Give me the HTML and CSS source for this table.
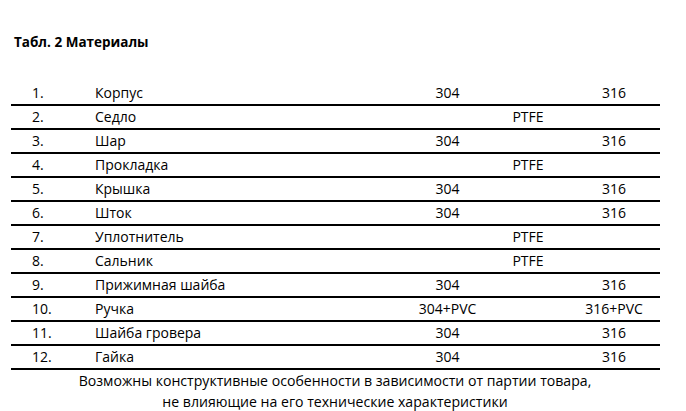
FILE: index.html
```html
<!DOCTYPE html>
<html lang="ru">
<head>
<meta charset="utf-8">
<link rel="stylesheet" href="styles.css">
</head>
<body>
<div class="page">
  <h1 class="title">Табл. 2 Материалы</h1>
  <div class="table">
    <div class="row"><span class="num">1.</span><span class="name">Корпус</span><span class="c3">304</span><span class="c4">316</span></div>
    <div class="row"><span class="num">2.</span><span class="name">Седло</span><span class="both">PTFE</span></div>
    <div class="row"><span class="num">3.</span><span class="name">Шар</span><span class="c3">304</span><span class="c4">316</span></div>
    <div class="row"><span class="num">4.</span><span class="name">Прокладка</span><span class="both">PTFE</span></div>
    <div class="row"><span class="num">5.</span><span class="name">Крышка</span><span class="c3">304</span><span class="c4">316</span></div>
    <div class="row"><span class="num">6.</span><span class="name">Шток</span><span class="c3">304</span><span class="c4">316</span></div>
    <div class="row"><span class="num">7.</span><span class="name">Уплотнитель</span><span class="both">PTFE</span></div>
    <div class="row"><span class="num">8.</span><span class="name">Сальник</span><span class="both">PTFE</span></div>
    <div class="row"><span class="num">9.</span><span class="name">Прижимная шайба</span><span class="c3">304</span><span class="c4">316</span></div>
    <div class="row"><span class="num">10.</span><span class="name">Ручка</span><span class="c3">304+PVC</span><span class="c4">316+PVC</span></div>
    <div class="row"><span class="num">11.</span><span class="name">Шайба гровера</span><span class="c3">304</span><span class="c4">316</span></div>
    <div class="row"><span class="num">12.</span><span class="name">Гайка</span><span class="c3">304</span><span class="c4">316</span></div>
  </div>
  <p class="note">Возможны конструктивные особенности в зависимости от партии товара,<br>не влияющие на его технические характеристики</p>
</div>
</body>
</html>
```
FILE: styles.css
```css
html, body {
  margin: 0;
  padding: 0;
  background: #fff;
}
.page {
  width: 686px;
  height: 411px;
  overflow: hidden;
  font-family: "Open Sans", "Liberation Sans", sans-serif;
  color: #000;
}
.title {
  margin: 0;
  padding: 31px 0 0 14px;
  height: 82px;
  box-sizing: border-box;
  font-size: 13.5px;
  font-weight: 700;
  line-height: 22px;
}
.table {
  margin: 0 0 0 11px;
  width: 649px;
}
.row {
  display: grid;
  grid-template-columns: 84px 301px 103px 69px 92px;
  height: 24px;
  box-sizing: border-box;
  border-bottom: 2px solid #000;
  font-size: 14px;
  line-height: 22px;
}
.num {
  padding-left: 21px;
}
.c3 {
  grid-column: 3;
  text-align: center;
}
.c4 {
  grid-column: 5;
  text-align: center;
}
.both {
  grid-column: 3 / 6;
  text-align: center;
}
.note {
  margin: 0;
  width: 670px;
  text-align: center;
  font-size: 14.1px;
  line-height: 21px;
}
```
